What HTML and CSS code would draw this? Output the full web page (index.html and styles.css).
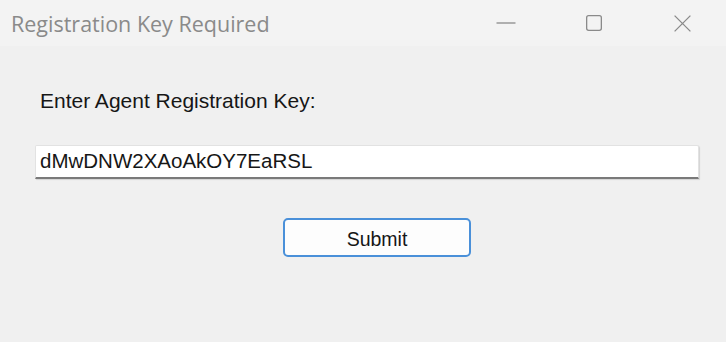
FILE: index.html
```html
<!DOCTYPE html>
<html lang="en">
<head>
<meta charset="utf-8">
<title>Registration Key Required</title>
<link rel="stylesheet" href="styles.css">
</head>
<body>
<div class="window">
  <div class="titlebar">
    <div class="title">Registration Key Required</div>
    <div class="controls">
      <div class="ctl">
        <svg width="20" height="4" viewBox="0 0 20 4"><line x1="0.5" y1="2" x2="19.5" y2="2" stroke="#8a8a8a" stroke-width="1.3"/></svg>
      </div>
      <div class="ctl">
        <svg width="16" height="16" viewBox="0 0 16 16"><rect x="0.65" y="0.65" width="14.7" height="14.7" rx="2" fill="none" stroke="#8a8a8a" stroke-width="1.3"/></svg>
      </div>
      <div class="ctl">
        <svg width="17" height="17" viewBox="0 0 17 17"><path d="M0.6 0.6L16.4 16.4M16.4 0.6L0.6 16.4" fill="none" stroke="#8a8a8a" stroke-width="1.3"/></svg>
      </div>
    </div>
  </div>
  <div class="content">
    <div class="label">Enter Agent Registration Key:</div>
    <input class="keybox" type="text" value="dMwDNW2XAoAkOY7EaRSL">
    <div class="actions">
      <button class="submit" type="button">Submit</button>
    </div>
  </div>
</div>
</body>
</html>
```

FILE: styles.css
```css
html, body {
  margin: 0;
  padding: 0;
}
body {
  width: 726px;
  height: 342px;
  background: #f0f0f0;
  overflow: hidden;
}
.window {
  display: flex;
  flex-direction: column;
  height: 342px;
}
.titlebar {
  display: flex;
  height: 46px;
  background: #f3f3f3;
  align-items: stretch;
}
.title {
  flex: 1;
  font-family: "Open Sans", "Noto Sans", sans-serif;
  font-size: 21.5px;
  line-height: 46px;
  padding-top: 1px;
  padding-left: 11px;
  color: #8a8a8a;
  white-space: nowrap;
}
.controls {
  display: flex;
}
.ctl {
  width: 88px;
  height: 46px;
  display: flex;
  align-items: center;
  justify-content: center;
}
.ctl svg {
  display: block;
}
.content {
  display: flex;
  flex-direction: column;
  padding: 44px 0 0 35px;
  font-family: "Liberation Sans", Arial, sans-serif;
  color: #161616;
}
.label {
  font-size: 21px;
  line-height: 22px;
  padding-left: 5px;
}
.keybox {
  box-sizing: border-box;
  margin: 33px 0 0 0;
  width: 664px;
  height: 34px;
  padding: 4px 4px 6px 4px;
  border: 1px solid #e2e2e2;
  border-bottom: 2px solid #7a7a7a;
  border-radius: 2px 2px 0 0;
  background: #ffffff;
  font-family: "Liberation Sans", Arial, sans-serif;
  font-size: 20.5px;
  line-height: 22px;
  color: #161616;
  outline: none;
  box-shadow: 1px 1px 1px rgba(0, 0, 0, 0.12);
}
.actions {
  display: flex;
  padding-left: 248px;
  margin-top: 39px;
}
.submit {
  box-sizing: border-box;
  width: 188px;
  height: 39px;
  padding: 2px 0 0 0;
  border: 2px solid #4a90d9;
  border-radius: 5px;
  background: #fdfdfd;
  font-family: "Liberation Sans", Arial, sans-serif;
  font-size: 19.5px;
  line-height: 22px;
  color: #161616;
}
```
